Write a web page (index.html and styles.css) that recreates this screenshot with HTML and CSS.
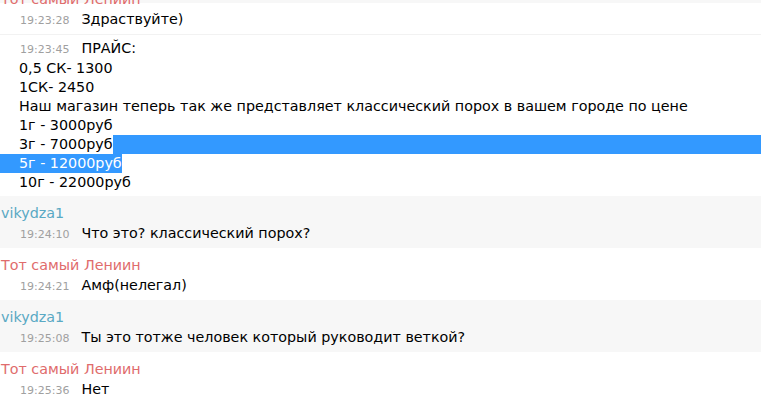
FILE: index.html
```html
<!DOCTYPE html>
<html lang="ru">
<head>
  <meta charset="UTF-8">
  <title>Чат</title>
  <link rel="stylesheet" href="styles.css">
</head>
<body>

<div class="chat">
  <div class="top-strip"></div>

  <div class="group first-group">
    <div class="name red">Тот самый Лениин</div>
    <div class="msg">
      <div class="line"><span class="time">19:23:28</span>Здраствуйте)</div>
    </div>
    <div class="msg sep">
      <div class="line"><span class="time">19:23:45</span>ПРАЙС:</div>
      <div class="line">0,5 СК- 1300</div>
      <div class="line">1СК- 2450</div>
      <div class="line">Наш магазин теперь так же представляет классический порох в вашем городе по цене</div>
      <div class="line">1г - 3000руб</div>
      <div class="line sel-tail">3г - 7000руб<span class="fill"></span></div>
      <div class="line"><span class="sel-lead">5г - 12000руб</span></div>
      <div class="line">10г - 22000руб</div>
    </div>
  </div>

  <div class="group alt">
    <div class="name blue">vikydza1</div>
    <div class="msg">
      <div class="line"><span class="time">19:24:10</span>Что это? классический порох?</div>
    </div>
  </div>

  <div class="group">
    <div class="name red">Тот самый Лениин</div>
    <div class="msg">
      <div class="line"><span class="time">19:24:21</span>Амф(нелегал)</div>
    </div>
  </div>

  <div class="group alt">
    <div class="name blue">vikydza1</div>
    <div class="msg">
      <div class="line"><span class="time">19:25:08</span>Ты это тотже человек который руководит веткой?</div>
    </div>
  </div>

  <div class="group">
    <div class="name red">Тот самый Лениин</div>
    <div class="msg">
      <div class="line"><span class="time">19:25:36</span>Нет</div>
    </div>
  </div>

  <div class="group alt"></div>
</div>

</body>
</html>
```

FILE: styles.css
```css
html, body {
  margin: 0;
  padding: 0;
  background: #fff;
  overflow: hidden;
}
.chat {
  font-family: "DejaVu Sans", Verdana, sans-serif;
  font-size: 14.3px;
  color: #000;
}
.top-strip {
  height: 3px;
  background: #f7f7f7;
}
.group {
  padding-top: 8px;
}
.first-group {
  margin-top: -21px;
}
.group.alt {
  background: #f7f7f7;
}
.name {
  line-height: 19px;
  padding-left: 1px;
}
.red {
  color: #e06c6c;
}
.blue {
  color: #5aa9c4;
}
.msg {
  padding: 1px 0 4px;
}
.msg.sep {
  border-top: 1px solid #f2f2f2;
  padding-top: 4px;
}
.line {
  line-height: 19px;
  padding-left: 19px;
  white-space: nowrap;
}
.time {
  display: inline-block;
  font-size: 11px;
  color: #a0a0a0;
  margin-left: 1px;
  margin-right: 12px;
}
.sel-tail {
  display: flex;
}
.fill {
  flex: 1;
  background: #3399ff;
}
.sel-lead {
  display: inline-block;
  margin-left: -19px;
  padding-left: 19px;
  background: #3399ff;
  color: #fff;
}
```
